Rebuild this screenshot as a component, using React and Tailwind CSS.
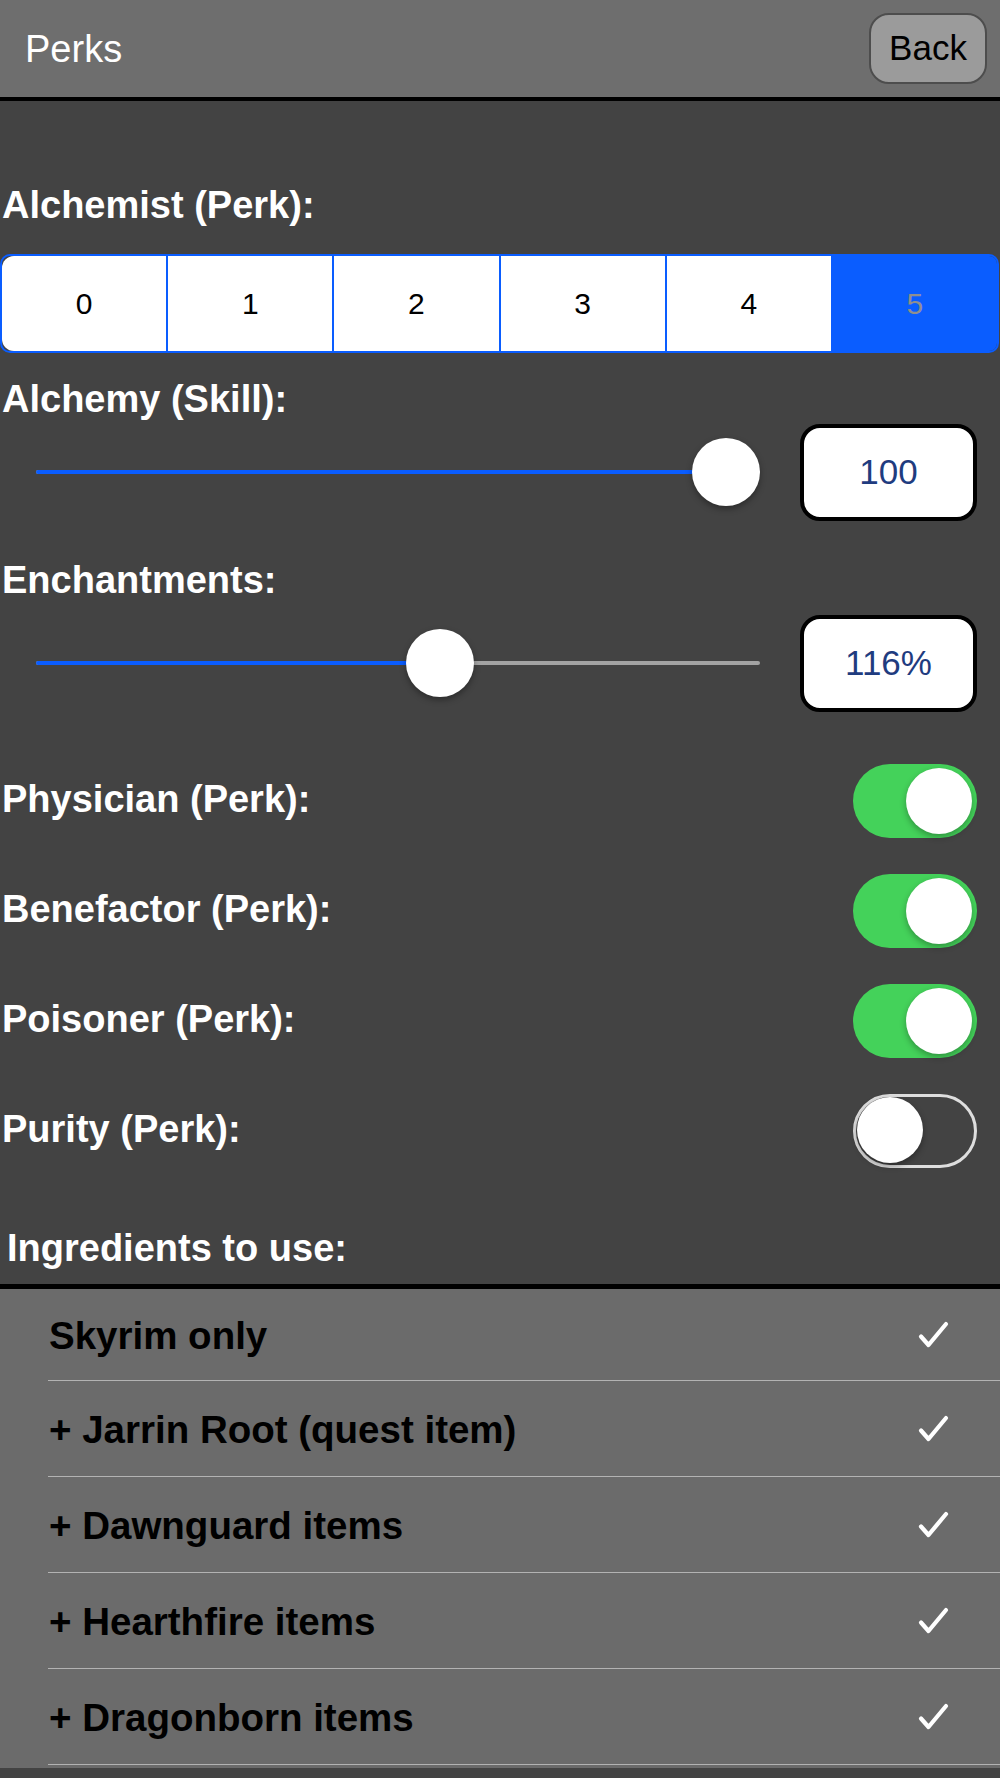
import React from "react";

function Label({ children, className = "" }) {
  return (
    <div className={"h-[44px] leading-[44px] text-[38px] font-bold text-white whitespace-nowrap " + className}>
      {children}
    </div>
  );
}

function Slider({ fraction, value, className = "" }) {
  const left = Math.round(fraction * (724 - 68));
  return (
    <div className={"flex items-center h-[98px] " + className}>
      <div className="relative ml-[36px] w-[724px] h-[68px]">
        <div className="absolute left-0 right-0 top-[32px] h-[4px] rounded-full bg-[#a3a3a3]" />
        <div
          className="absolute left-0 top-[32px] h-[4px] rounded-full bg-[#0a5dff]"
          style={{ width: left + 34 }}
        />
        <div
          className="absolute top-0 w-[68px] h-[68px] rounded-full bg-white shadow-[0_3px_6px_rgba(0,0,0,0.35)]"
          style={{ left }}
        />
      </div>
      <div className="ml-[40px] w-[177px] h-[97px] border-4 border-black rounded-[20px] bg-white flex items-center justify-center text-[35px] text-[#1f3c7f]">
        {value}
      </div>
    </div>
  );
}

function Switch({ on }) {
  if (on) {
    return (
      <div className="relative w-[124px] h-[74px] rounded-full bg-[#44d25a]">
        <div className="absolute top-[4px] right-[5px] w-[66px] h-[66px] rounded-full bg-white shadow-[0_3px_6px_rgba(0,0,0,0.3)]" />
      </div>
    );
  }
  return (
    <div className="relative w-[124px] h-[74px] rounded-full border-[3px] border-[#dedede]">
      <div className="absolute top-[0px] left-[1px] w-[66px] h-[66px] rounded-full bg-white shadow-[0_3px_6px_rgba(0,0,0,0.35)]" />
    </div>
  );
}

function SwitchRow({ label, on }) {
  return (
    <div className="flex items-center justify-between h-[110px] pr-[23px]">
      <Label className="pl-[2px] -mt-[4px]">{label}</Label>
      <Switch on={on} />
    </div>
  );
}

function Check() {
  return (
    <svg width="32" height="27" viewBox="0 0 32 27" fill="none">
      <path
        d="M4 15.5 L11.5 24 L29 3"
        stroke="white"
        strokeWidth="4.2"
        strokeLinecap="round"
        strokeLinejoin="round"
      />
    </svg>
  );
}

function Row({ text, first }) {
  return (
    <div className="pl-[48px]">
      <div
        className={
          "flex items-center justify-between border-b border-[#b3b3b3] pr-[51px] " +
          (first ? "h-[92px]" : "h-[96px]")
        }
      >
        <span className="text-[38.5px] font-bold text-black whitespace-nowrap pl-[1px] pt-[2px]">{text}</span>
        <Check />
      </div>
    </div>
  );
}

export default function App() {
  const segs = ["0", "1", "2", "3", "4", "5"];
  return (
    <div className="w-[1000px] min-h-[1778px] bg-[#434343] font-['Liberation_Sans',Arial,sans-serif]">
      {/* Header */}
      <div className="h-[101px] bg-[#6e6e6e] border-b-4 border-black flex items-center justify-between pl-[25px] pr-[13px]">
        <span className="text-[38px] text-white leading-none">Perks</span>
        <div className="w-[118px] h-[71px] rounded-[20px] bg-[#9b9b9b] border-2 border-[#4d4d4d] flex items-center justify-center text-[35px] text-black">
          Back
        </div>
      </div>

      {/* Content */}
      <div className="pt-[82px]">
        <Label className="pl-[2px]">Alchemist (Perk):</Label>
        <div className="mt-[27px] flex h-[99px] w-[999px] border-2 border-[#0a5dff] rounded-[10px] overflow-hidden">
          {segs.map((s, i) =>
            i === 5 ? (
              <div key={s} className="flex-1 bg-[#0a5dff] flex items-center justify-center text-[30px] text-[#8f8f8f]">
                {s}
              </div>
            ) : (
              <div
                key={s}
                className={
                  "flex-1 bg-white flex items-center justify-center text-[30px] text-black border-r-2 border-[#0a5dff] " +
                  (i === 0 ? "rounded-l-[12px]" : "")
                }
              >
                {s}
              </div>
            )
          )}
        </div>

        <Label className="pl-[2px] mt-[24px]">Alchemy (Skill):</Label>
        <Slider fraction={1} value="100" className="mt-[2px]" />

        <Label className="pl-[2px] mt-[37px]">Enchantments:</Label>
        <Slider fraction={0.564} value="116%" className="mt-[12px]" />

        <div className="mt-[34px]">
          <SwitchRow label="Physician (Perk):" on />
          <SwitchRow label="Benefactor (Perk):" on />
          <SwitchRow label="Poisoner (Perk):" on />
          <SwitchRow label="Purity (Perk):" on={false} />
        </div>

        <Label className="pl-[7px] mt-[40px]">Ingredients to use:</Label>
        <div className="mt-[14px] h-[5px] bg-black" />
      </div>

      {/* Table */}
      <div className="bg-[#6b6b6b] pb-[3px]">
        <Row text="Skyrim only" first />
        <Row text="+ Jarrin Root (quest item)" />
        <Row text="+ Dawnguard items" />
        <Row text="+ Hearthfire items" />
        <Row text="+ Dragonborn items" />
      </div>
    </div>
  );
}
